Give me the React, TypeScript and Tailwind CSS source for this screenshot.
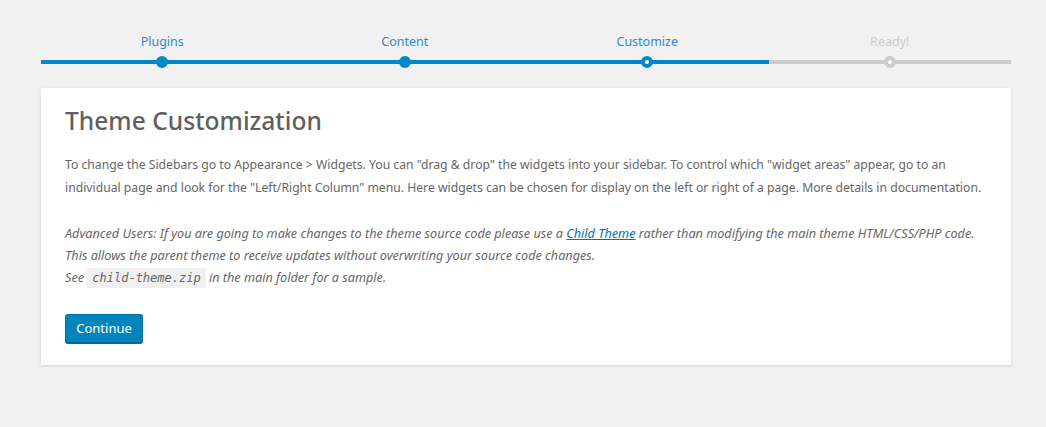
import React from "react";

const steps = [
  { label: "Plugins", state: "done" },
  { label: "Content", state: "done" },
  { label: "Customize", state: "active" },
  { label: "Ready!", state: "todo" },
];

export default function App() {
  return (
    <div
      className="min-h-[427px] w-full bg-[#f1f1f1] pt-[33px] text-[12.2px] text-[#666]"
      style={{ fontFamily: '"Noto Sans", "Open Sans", sans-serif' }}
    >
      <div className="ml-[41px] w-[970px]">
        <ol className="flex">
          {steps.map((s) => (
            <li
              key={s.label}
              className={`relative flex-1 pb-[9px] text-center text-[12.5px] leading-[18px] border-b-4 ${
                s.state === "todo" ? "border-[#cccccc] text-[#cccccc]" : "border-[#0089c8] text-[#2a8ccc]"
              }`}
            >
              {s.label}
              <span
                className={`absolute left-1/2 -bottom-[8px] -ml-[6px] h-[12px] w-[12px] rounded-full border-4 ${
                  s.state === "todo"
                    ? "border-[#cccccc] bg-white"
                    : s.state === "active"
                    ? "border-[#0089c8] bg-white"
                    : "border-[#0089c8] bg-[#0089c8]"
                }`}
              />
            </li>
          ))}
        </ol>

        <div className="mt-[24px] bg-white px-[24px] pt-[13px] pb-[22px] shadow-[0_1px_3px_rgba(0,0,0,0.13)]">
          <h1 className="text-[24.6px] leading-[40px] text-[#5f5f5f] font-medium mb-[12px]">Theme Customization</h1>
          <p className="leading-[23px]">
            To change the Sidebars go to Appearance &gt; Widgets. You can "drag &amp; drop" the widgets into your sidebar. To control which "widget areas" appear, go to an individual page and look for the "Left/Right Column" menu. Here widgets can be chosen for display on the left or right of a page. More details in documentation.
          </p>
          <p className="mt-[23px] italic text-[12.65px] leading-[22px]">
            Advanced Users: If you are going to make changes to the theme source code please use a{" "}
            <a className="text-[#0073aa] underline" href="#">Child Theme</a> rather than modifying the main theme HTML/CSS/PHP code.
            <br />
            This allows the parent theme to receive updates without overwriting your source code changes.
            <br />
            See{" "}
            <code
              className="bg-[#f0f0f0] px-[5px] py-[3px] text-[12px]"
              style={{ fontFamily: '"DejaVu Sans Mono", monospace' }}
            >
              child-theme.zip
            </code>{" "}
            in the main folder for a sample.
          </p>
          <button className="mt-[25px] h-[29px] w-[78px] rounded-[3px] border border-[#0073aa] border-b-[#006799] bg-[#0085ba] text-[13px] text-white shadow-[0_1px_0_#006799]">
            Continue
          </button>
        </div>
      </div>
    </div>
  );
}
